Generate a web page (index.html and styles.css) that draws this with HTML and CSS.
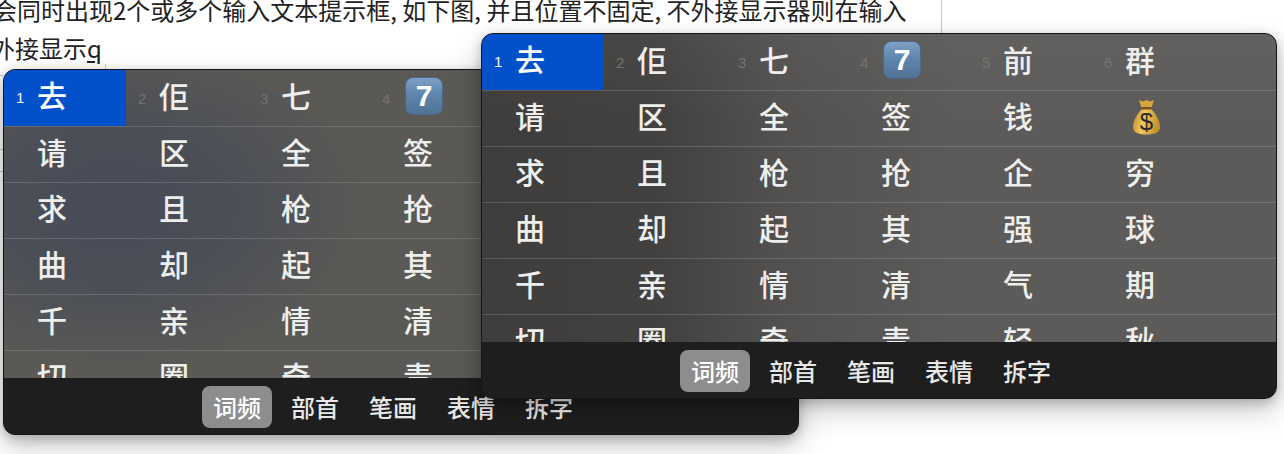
FILE: index.html
```html
<!DOCTYPE html>
<html lang="zh-CN">
<head>
    <meta charset="UTF-8">
    <title>输入法候选框</title>
    <link rel="stylesheet" href="styles.css">
</head>
<body>
    <div class="doc">
        <p class="doc-line">会同时出现2个或多个输入文本提示框, 如下图, 并且位置不固定, 不外接显示器则在输入</p>
        <p class="doc-line doc-line-second">外接显示<u>q</u></p>
        <span class="rule rule-right"></span>
        <span class="rule rule-left"></span>
        <span class="edge edge-a"></span>
        <span class="edge edge-b"></span>
        <span class="edge edge-c"></span>
    </div>

    <div class="panel panel-back">
        <div class="rows">
            <div class="row">
                <div class="cell selected"><span class="num">1</span><span class="ch">去</span></div>
                <div class="cell"><span class="num">2</span><span class="ch">佢</span></div>
                <div class="cell"><span class="num">3</span><span class="ch">七</span></div>
                <div class="cell"><span class="num">4</span><span class="keycap">7</span></div>
            </div>
            <div class="row">
                <div class="cell"><span class="ch">请</span></div>
                <div class="cell"><span class="ch">区</span></div>
                <div class="cell"><span class="ch">全</span></div>
                <div class="cell"><span class="ch">签</span></div>
            </div>
            <div class="row">
                <div class="cell"><span class="ch">求</span></div>
                <div class="cell"><span class="ch">且</span></div>
                <div class="cell"><span class="ch">枪</span></div>
                <div class="cell"><span class="ch">抢</span></div>
            </div>
            <div class="row">
                <div class="cell"><span class="ch">曲</span></div>
                <div class="cell"><span class="ch">却</span></div>
                <div class="cell"><span class="ch">起</span></div>
                <div class="cell"><span class="ch">其</span></div>
            </div>
            <div class="row">
                <div class="cell"><span class="ch">千</span></div>
                <div class="cell"><span class="ch">亲</span></div>
                <div class="cell"><span class="ch">情</span></div>
                <div class="cell"><span class="ch">清</span></div>
            </div>
            <div class="row">
                <div class="cell"><span class="ch">切</span></div>
                <div class="cell"><span class="ch">圈</span></div>
                <div class="cell"><span class="ch">奇</span></div>
                <div class="cell"><span class="ch">青</span></div>
            </div>
        </div>
        <div class="tabs">
            <span class="tab active">词频</span>
            <span class="tab">部首</span>
            <span class="tab">笔画</span>
            <span class="tab">表情</span>
            <span class="tab">拆字</span>
        </div>
    </div>

    <div class="panel panel-front">
        <div class="rows">
            <div class="row">
                <div class="cell selected"><span class="num">1</span><span class="ch">去</span></div>
                <div class="cell"><span class="num">2</span><span class="ch">佢</span></div>
                <div class="cell"><span class="num">3</span><span class="ch">七</span></div>
                <div class="cell"><span class="num">4</span><span class="keycap">7</span></div>
                <div class="cell"><span class="num">5</span><span class="ch">前</span></div>
                <div class="cell"><span class="num">6</span><span class="ch">群</span></div>
            </div>
            <div class="row">
                <div class="cell"><span class="ch">请</span></div>
                <div class="cell"><span class="ch">区</span></div>
                <div class="cell"><span class="ch">全</span></div>
                <div class="cell"><span class="ch">签</span></div>
                <div class="cell"><span class="ch">钱</span></div>
                <div class="cell">
                    <svg class="moneybag" viewBox="0 0 27 36">
                        <defs>
                            <linearGradient id="bag" x1="0" y1="0" x2="1" y2="0.2">
                                <stop offset="0" stop-color="#b98a26"/>
                                <stop offset="0.45" stop-color="#f0c95c"/>
                                <stop offset="1" stop-color="#c4922c"/>
                            </linearGradient>
                        </defs>
                        <path d="M6 1 L10 2.5 L13.5 1 L17 2.5 L21 1 L18.5 9 L8.5 9 Z" fill="#d6a63e"/>
                        <path d="M8.5 8 H18.5 L19 10.5 H8 Z" fill="#7a5416"/>
                        <path d="M8.5 10.5 C4 15 0 22 0 28 C0 33.5 5 35.5 13.5 35.5 C22 35.5 27 33.5 27 28 C27 22 23 15 18.5 10.5 Z" fill="url(#bag)"/>
                        <text x="13.5" y="31" text-anchor="middle" class="dollar">$</text>
                    </svg>
                </div>
            </div>
            <div class="row">
                <div class="cell"><span class="ch">求</span></div>
                <div class="cell"><span class="ch">且</span></div>
                <div class="cell"><span class="ch">枪</span></div>
                <div class="cell"><span class="ch">抢</span></div>
                <div class="cell"><span class="ch">企</span></div>
                <div class="cell"><span class="ch">穷</span></div>
            </div>
            <div class="row">
                <div class="cell"><span class="ch">曲</span></div>
                <div class="cell"><span class="ch">却</span></div>
                <div class="cell"><span class="ch">起</span></div>
                <div class="cell"><span class="ch">其</span></div>
                <div class="cell"><span class="ch">强</span></div>
                <div class="cell"><span class="ch">球</span></div>
            </div>
            <div class="row">
                <div class="cell"><span class="ch">千</span></div>
                <div class="cell"><span class="ch">亲</span></div>
                <div class="cell"><span class="ch">情</span></div>
                <div class="cell"><span class="ch">清</span></div>
                <div class="cell"><span class="ch">气</span></div>
                <div class="cell"><span class="ch">期</span></div>
            </div>
            <div class="row">
                <div class="cell"><span class="ch">切</span></div>
                <div class="cell"><span class="ch">圈</span></div>
                <div class="cell"><span class="ch">奇</span></div>
                <div class="cell"><span class="ch">青</span></div>
                <div class="cell"><span class="ch">轻</span></div>
                <div class="cell"><span class="ch">秋</span></div>
            </div>
        </div>
        <div class="tabs">
            <span class="tab active">词频</span>
            <span class="tab">部首</span>
            <span class="tab">笔画</span>
            <span class="tab">表情</span>
            <span class="tab">拆字</span>
        </div>
    </div>
</body>
</html>
```

FILE: styles.css
```css
html, body {
    margin: 0;
    height: 100%;
    overflow: hidden;
    background: #fff;
    font-family: "Noto Sans CJK SC", "Liberation Sans", sans-serif;
}

/* the document behind the two popups */
.doc {
    color: #222;
    font-size: 24px;
    white-space: nowrap;
}
.doc-line {
    margin: -9px 0 0 -7px;
    height: 38px;
    line-height: 38px;
}
.doc-line-second {
    margin: 0 0 0 -9px;
}
.doc u {
    text-underline-offset: 3px;
}
.rule {
    position: absolute;
    width: 1px;
    background: #c9c9c9;
}
.rule-right { left: 941px; top: 0; height: 33px; }
.rule-left { left: 105px; top: 64px; height: 5px; }
.edge {
    position: absolute;
    left: 0;
    width: 3px;
    height: 1px;
    background: #c9c9c9;
}
.edge-a { top: 75px; }
.edge-b { top: 149px; }
.edge-c { top: 171px; }

/* popup windows sit on a free canvas */
.panel {
    position: absolute;
    width: 794px;
    height: 364px;
    border: 1px solid #161616;
    border-radius: 12px;
    overflow: hidden;
    display: flex;
    flex-direction: column;
    box-shadow: 0 4px 12px rgba(0,0,0,0.22), 0 12px 30px rgba(0,0,0,0.2);
}
.panel-back {
    left: 3px;
    top: 69px;
    background:
        radial-gradient(ellipse 260px 170px at 110px 135px, #464b57 0%, rgba(70,75,87,0.75) 45%, rgba(70,75,87,0) 100%),
        #5a5955;
}
.panel-front {
    left: 481px;
    top: 33px;
    background:
        linear-gradient(180deg, rgba(255,255,255,0.035) 0%, rgba(255,255,255,0) 25%),
        linear-gradient(90deg, #3e3d3b 0%, #42413f 22%, #525150 38%, #5c5b59 60%, #5c5b59 100%);
}

.rows {
    box-sizing: border-box;
    height: 308px;
    padding-top: 1px;
    overflow: hidden;
    flex-shrink: 0;
}
.row {
    box-sizing: border-box;
    display: grid;
    grid-template-columns: repeat(6, 122px);
    height: 56px;
    border-bottom: 1px solid rgba(255,255,255,0.15);
}
.cell {
    box-sizing: border-box;
    position: relative;
    display: flex;
    align-items: center;
    padding: 0 0 8px 33px;
    height: 55px;
}
.selected {
    margin-top: -1px;
    height: 56px;
    background: #0250ca;
}
.num {
    position: absolute;
    left: 12px;
    top: 20px;
    font-family: "Liberation Sans", sans-serif;
    font-size: 15px;
    line-height: 16px;
    color: #737371;
}
.selected .num {
    color: #fff;
}
.ch {
    font-size: 30px;
    font-weight: 500;
    line-height: 40px;
    color: #eeeeec;
}
.selected .ch {
    color: #fff;
}
.keycap {
    width: 38px;
    height: 38px;
    margin-left: 2px;
    margin-top: 3px;
    box-sizing: border-box;
    border: 1px solid #4b6a88;
    border-radius: 8px;
    background: linear-gradient(180deg, #7da0c6 0%, #5f86ad 45%, #4f7294 100%);
    color: #fff;
    font-family: "Liberation Sans", sans-serif;
    font-weight: 700;
    font-size: 30px;
    line-height: 36px;
    text-align: center;
}
.moneybag {
    width: 27px;
    height: 36px;
    margin-left: 8px;
    margin-top: 4px;
}
.dollar {
    font-family: "Liberation Sans", sans-serif;
    font-size: 24px;
    fill: #2a2a2e;
}

.tabs {
    flex: 1;
    display: flex;
    justify-content: center;
    align-items: flex-start;
    gap: 8px;
    padding: 8px 16px 0 0;
    background: #1e1e1e;
}
.tab {
    width: 70px;
    height: 42px;
    border-radius: 8px;
    color: #e8e8e8;
    font-size: 24px;
    font-weight: 500;
    line-height: 42px;
    text-align: center;
}
.tab.active {
    background: #8d8d8d;
    color: #fff;
}
```
